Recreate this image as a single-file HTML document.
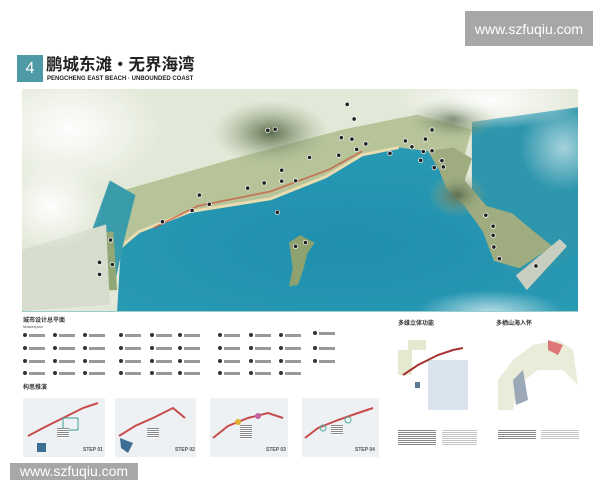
<!DOCTYPE html>
<html><head><meta charset="utf-8"><style>
*{margin:0;padding:0;box-sizing:border-box}
body{width:600px;height:480px;background:#fff;position:relative;overflow:hidden;font-family:"Liberation Sans","Noto Sans CJK SC",sans-serif}
.abs{position:absolute}
.wm{background:#a7a7a7;color:#fff;font-size:14px;display:flex;align-items:center;justify-content:center}
.leg{position:absolute;font-size:3px;color:#555;display:flex;align-items:center;gap:2px}
.leg i{display:inline-block;width:4px;height:4px;border-radius:50%;background:#333}
.leg b{display:inline-block;width:16px;height:3px;background:#999}
.step{position:absolute;background:#eef1f3}
.txt{position:absolute;background:repeating-linear-gradient(#888 0 1px,#fff 1px 2px)}
</style></head><body>
<div class="abs wm" style="left:465px;top:11px;width:128px;height:35px">www.szfuqiu.com</div>

<div class="abs" style="left:17px;top:55px;width:26px;height:27px;background:#4e9aa6;color:#fff;font-size:16px;display:flex;align-items:center;justify-content:center">4</div>
<div class="abs" style="left:46px;top:54px;font-size:16.5px;line-height:22px;font-weight:bold;color:#222;white-space:nowrap">鹏城东滩・无界海湾</div>
<div class="abs" style="left:47px;top:76px;font-size:6px;line-height:7px;font-weight:bold;color:#222;white-space:nowrap">PENGCHENG EAST BEACH · UNBOUNDED COAST</div>

<svg class="abs" style="left:22px;top:89px" width="556" height="222" viewBox="20 10 1520 607" preserveAspectRatio="none">
<defs>
<radialGradient id="sea" cx="0.5" cy="0.6" r="0.7"><stop offset="0" stop-color="#1f8fae"/><stop offset="1" stop-color="#2a9bb3"/></radialGradient>
<radialGradient id="mt" cx="0.5" cy="0.5" r="0.5"><stop offset="0" stop-color="#5d6e4f"/><stop offset="1" stop-color="#9fb08a" stop-opacity="0"/></radialGradient>
<radialGradient id="cl" cx="0.5" cy="0.5" r="0.5"><stop offset="0" stop-color="#fff" stop-opacity="0.95"/><stop offset="1" stop-color="#fff" stop-opacity="0"/></radialGradient>
</defs>
<rect x="20" y="10" width="1520" height="607" fill="#e3e9d8"/>
<path d="M250 300L600 200L900 120L1100 80L1250 120L1200 300L1400 350L1500 430L1300 520L1150 450L1000 250L700 330L400 400L280 450Z" fill="#b7c49a"/>
<path d="M1250 100L1540 60V617L1250 617Z" fill="#2d96ac"/>
<path d="M280 617L290 450L340 400L480 345L700 310L850 250L950 190L1050 170L1130 180L1160 230L1180 280L1230 330L1280 400L1310 470L1370 520L1420 560L1450 520L1540 450V617Z" fill="url(#sea)"/>
<path d="M280 450L340 400L480 345L700 310L850 250L950 190L1050 170" fill="none" stroke="#e9dcb0" stroke-width="8"/>
<path d="M380 390L500 330L700 290L860 230L950 180" fill="none" stroke="#c9573b" stroke-width="5" opacity="0.7"/>
<path d="M750 430L780 410L820 430L800 460L790 500L775 545L750 550L760 500Z" fill="#8ea26f"/>
<path d="M1130 180L1200 170L1250 200L1230 260L1290 330L1360 350L1420 400L1470 440L1380 500L1310 480L1280 400L1230 330L1180 280L1160 230Z" fill="#9fac80"/>
<path d="M1370 520L1490 420L1510 440L1400 560Z" fill="#c9cfc0"/>
<path d="M260 260L330 300L300 420L270 560L220 560L210 400Z" fill="#3a9bab"/>
<path d="M240 400L270 400L280 560L240 560Z" fill="#92a776"/>
<path d="M20 450L250 380L260 600L20 617Z" fill="#d6ddcd"/>
<ellipse cx="700" cy="130" rx="160" ry="90" fill="url(#mt)"/>
<ellipse cx="1210" cy="300" rx="80" ry="60" fill="url(#mt)"/>
<ellipse cx="1200" cy="90" rx="120" ry="60" fill="url(#mt)"/>
<ellipse cx="150" cy="120" rx="260" ry="170" fill="url(#cl)"/>
<ellipse cx="100" cy="330" rx="140" ry="120" fill="url(#cl)"/>
<ellipse cx="1300" cy="40" rx="260" ry="80" fill="url(#cl)"/>
<ellipse cx="1500" cy="170" rx="120" ry="120" fill="url(#cl)" opacity="0.6"/>
<ellipse cx="1300" cy="620" rx="200" ry="60" fill="url(#cl)" opacity="0.7"/>
<g fill="#222" stroke="#fff" stroke-width="2">
<circle cx="404" cy="373" r="6"/><circle cx="485" cy="342" r="6"/><circle cx="505" cy="300" r="6"/><circle cx="532" cy="325" r="6"/><circle cx="637" cy="281" r="6"/><circle cx="682" cy="267" r="6"/><circle cx="730" cy="262" r="6"/><circle cx="768" cy="261" r="6"/><circle cx="730" cy="232" r="6"/><circle cx="806" cy="197" r="6"/><circle cx="886" cy="191" r="6"/><circle cx="893" cy="143" r="6"/><circle cx="922" cy="147" r="6"/><circle cx="935" cy="175" r="6"/><circle cx="960" cy="160" r="6"/><circle cx="928" cy="92" r="6"/><circle cx="909" cy="52" r="6"/><circle cx="692" cy="123" r="6"/><circle cx="712" cy="120" r="6"/><circle cx="1068" cy="152" r="6"/><circle cx="1086" cy="168" r="6"/><circle cx="1117" cy="181" r="6"/><circle cx="1141" cy="179" r="6"/><circle cx="1123" cy="147" r="6"/><circle cx="1141" cy="122" r="6"/><circle cx="1168" cy="206" r="6"/><circle cx="1172" cy="223" r="6"/><circle cx="1147" cy="225" r="6"/><circle cx="1026" cy="186" r="6"/><circle cx="1110" cy="205" r="6"/><circle cx="768" cy="440" r="6"/><circle cx="795" cy="430" r="6"/><circle cx="262" cy="423" r="6"/><circle cx="232" cy="484" r="6"/><circle cx="267" cy="490" r="6"/><circle cx="232" cy="517" r="6"/><circle cx="1288" cy="355" r="6"/><circle cx="1308" cy="385" r="6"/><circle cx="1308" cy="410" r="6"/><circle cx="1310" cy="442" r="6"/><circle cx="1325" cy="474" r="6"/><circle cx="1425" cy="494" r="6"/><circle cx="718" cy="347" r="6"/>
</g>
</svg>
<div class="abs" style="left:22px;top:311px;width:556px;height:1px;background:#9cc"></div>

<div class="abs" style="left:23px;top:315px;font-size:6px;font-weight:bold;color:#333">城市设计总平面</div>
<div class="abs" style="left:23px;top:324px;font-size:4px;color:#555">Masterplan</div>
<div class="leg" style="left:23px;top:333px"><i></i><b></b></div><div class="leg" style="left:53px;top:333px"><i></i><b></b></div><div class="leg" style="left:83px;top:333px"><i></i><b></b></div><div class="leg" style="left:119px;top:333px"><i></i><b></b></div><div class="leg" style="left:150px;top:333px"><i></i><b></b></div><div class="leg" style="left:178px;top:333px"><i></i><b></b></div><div class="leg" style="left:218px;top:333px"><i></i><b></b></div><div class="leg" style="left:249px;top:333px"><i></i><b></b></div><div class="leg" style="left:279px;top:333px"><i></i><b></b></div><div class="leg" style="left:313px;top:331px"><i></i><b></b></div>
<div class="leg" style="left:23px;top:346px"><i></i><b></b></div><div class="leg" style="left:53px;top:346px"><i></i><b></b></div><div class="leg" style="left:83px;top:346px"><i></i><b></b></div><div class="leg" style="left:119px;top:346px"><i></i><b></b></div><div class="leg" style="left:150px;top:346px"><i></i><b></b></div><div class="leg" style="left:178px;top:346px"><i></i><b></b></div><div class="leg" style="left:218px;top:346px"><i></i><b></b></div><div class="leg" style="left:249px;top:346px"><i></i><b></b></div><div class="leg" style="left:279px;top:346px"><i></i><b></b></div><div class="leg" style="left:313px;top:346px"><i></i><b></b></div>
<div class="leg" style="left:23px;top:359px"><i></i><b></b></div><div class="leg" style="left:53px;top:359px"><i></i><b></b></div><div class="leg" style="left:83px;top:359px"><i></i><b></b></div><div class="leg" style="left:119px;top:359px"><i></i><b></b></div><div class="leg" style="left:150px;top:359px"><i></i><b></b></div><div class="leg" style="left:178px;top:359px"><i></i><b></b></div><div class="leg" style="left:218px;top:359px"><i></i><b></b></div><div class="leg" style="left:249px;top:359px"><i></i><b></b></div><div class="leg" style="left:279px;top:359px"><i></i><b></b></div><div class="leg" style="left:313px;top:359px"><i></i><b></b></div>
<div class="leg" style="left:23px;top:371px"><i></i><b></b></div><div class="leg" style="left:53px;top:371px"><i></i><b></b></div><div class="leg" style="left:83px;top:371px"><i></i><b></b></div><div class="leg" style="left:119px;top:371px"><i></i><b></b></div><div class="leg" style="left:150px;top:371px"><i></i><b></b></div><div class="leg" style="left:178px;top:371px"><i></i><b></b></div><div class="leg" style="left:218px;top:371px"><i></i><b></b></div><div class="leg" style="left:249px;top:371px"><i></i><b></b></div><div class="leg" style="left:279px;top:371px"><i></i><b></b></div>
<div class="abs" style="left:23px;top:382px;font-size:6px;font-weight:bold;color:#333">构思推演</div>

<div class="step" style="left:23px;top:398px;width:82px;height:59px"></div>
<div class="step" style="left:115px;top:398px;width:81px;height:59px"></div>
<div class="step" style="left:210px;top:398px;width:78px;height:59px"></div>
<div class="step" style="left:302px;top:398px;width:77px;height:59px"></div>
<svg class="abs" style="left:23px;top:398px" width="360" height="59">
<path d="M5 38L20 30L40 20L60 10L75 5" stroke="#c84a4a" stroke-width="2" fill="none"/>
<rect x="14" y="45" width="9" height="9" fill="#3d6f95"/><rect x="40" y="20" width="15" height="12" fill="none" stroke="#3aa39a"/>
<path d="M96 38L112 28L130 20L150 10L162 20" stroke="#c84a4a" stroke-width="2" fill="none"/>
<path d="M97 40L110 45L105 55L98 50Z" fill="#3d6f95"/>
<path d="M190 40L205 28L225 20L245 15L260 20" stroke="#c84a4a" stroke-width="2" fill="none"/>
<circle cx="215" cy="24" r="3" fill="#e0b030"/><circle cx="235" cy="18" r="3" fill="#c060a0"/>
<path d="M282 40L295 30L315 22L335 15L350 10" stroke="#c84a4a" stroke-width="2" fill="none"/>
<circle cx="300" cy="30" r="3" fill="none" stroke="#5a9"/><circle cx="325" cy="22" r="3" fill="none" stroke="#5a9"/>
<g font-family="Liberation Sans" font-size="5" font-weight="bold" fill="#555"><text x="60" y="53">STEP 01</text><text x="152" y="53">STEP 02</text><text x="243" y="53">STEP 03</text><text x="332" y="53">STEP 04</text></g>
</svg>
<div class="txt" style="left:57px;top:428px;width:12px;height:10px"></div>
<div class="txt" style="left:147px;top:428px;width:12px;height:10px"></div>
<div class="txt" style="left:240px;top:425px;width:12px;height:14px"></div>
<div class="txt" style="left:331px;top:425px;width:12px;height:10px"></div>

<div class="abs" style="left:398px;top:318px;font-size:6px;font-weight:bold;color:#333">多维立体功能</div>
<div class="abs" style="left:496px;top:318px;font-size:6px;font-weight:bold;color:#333">多栖山海入怀</div>
<svg class="abs" style="left:398px;top:340px" width="190" height="80">
<rect x="0" y="10" width="14" height="25" fill="#e4ead0"/><rect x="10" y="0" width="18" height="10" fill="#e4ead0"/><rect x="30" y="20" width="40" height="50" fill="#dae4ee"/>
<path d="M5 35L20 25L40 15L55 10L65 8" stroke="#a83232" stroke-width="2" fill="none"/>
<rect x="17" y="42" width="5" height="6" fill="#5a7a95"/>
<path d="M100 40L115 20L135 5L160 0L175 10L180 45L165 30L140 30L120 45L115 70L100 70Z" fill="#e8ecd8"/>
<path d="M115 40L125 30L130 60L118 65Z" fill="#9aa8b8"/><path d="M150 0L165 5L160 15L150 10Z" fill="#d77"/>
</svg>
<div class="txt" style="left:398px;top:430px;width:38px;height:16px"></div>
<div class="txt" style="left:442px;top:430px;width:35px;height:16px;opacity:0.5"></div>
<div class="txt" style="left:498px;top:430px;width:38px;height:10px"></div>
<div class="txt" style="left:541px;top:430px;width:38px;height:10px;opacity:0.5"></div>

<div class="abs wm" style="left:10px;top:463px;width:128px;height:17px;align-items:flex-start;padding-top:0">www.szfuqiu.com</div>
</body></html>
